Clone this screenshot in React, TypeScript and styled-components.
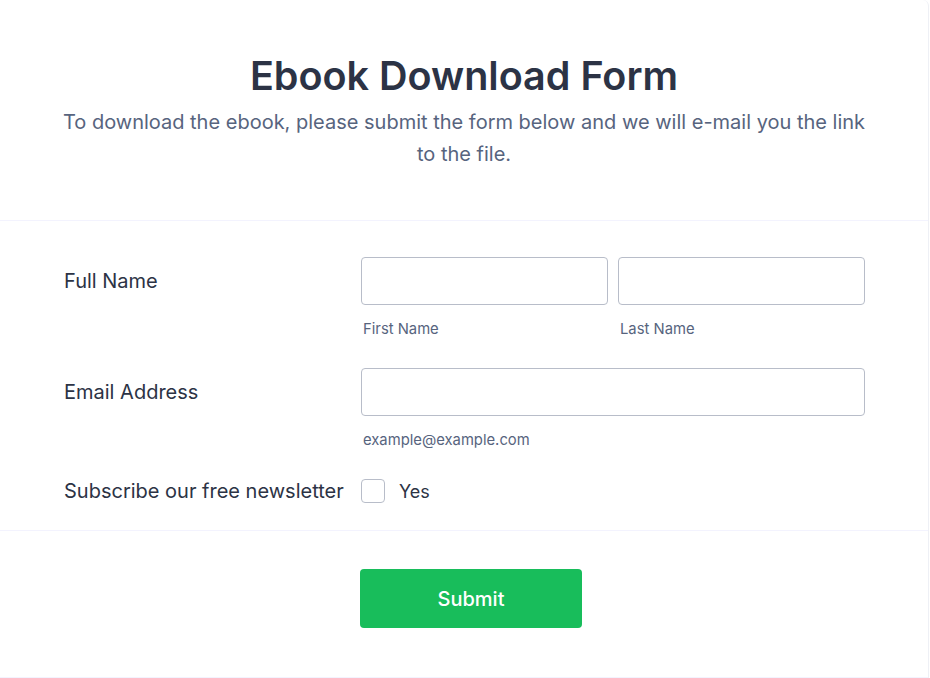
import { createGlobalStyle, styled } from 'styled-components';

const GlobalStyle = createGlobalStyle`
  html, body {
    margin: 0;
    padding: 0;
    background: #ffffff;
  }
  body {
    font-family: Inter, "Noto Sans", "Liberation Sans", sans-serif;
    color: #2c3345;
  }
  * {
    box-sizing: border-box;
  }
`;

const Card = styled.div`
  width: 929px;
  min-height: 678px;
  background: #fff;
  border-right: 1px solid #eef0f5;
  border-top-right-radius: 6px;
`;

const Header = styled.header`
  padding: 52px 60px 50px;
  text-align: center;
  border-bottom: 1px solid #f3f3fe;
`;

const Title = styled.h1`
  margin: 0;
  font-size: 39.5px;
  line-height: 48px;
  font-weight: 600;
  color: #2c3345;
`;

const Subtitle = styled.p`
  margin: 6px 0 0;
  font-size: 20px;
  line-height: 32px;
  color: #57647e;
`;

const Fields = styled.section`
  display: flex;
  flex-direction: column;
  gap: 29px;
  padding: 36px 63px 27px 64px;
  border-bottom: 1px solid #f3f3fe;
`;

const Row = styled.div`
  display: grid;
  grid-template-columns: 297px 1fr;
  align-items: start;
`;

const Label = styled.label<{ $height: number }>`
  display: flex;
  align-items: center;
  height: ${(p) => p.$height}px;
  font-size: 20px;
  color: #2c3345;
  white-space: nowrap;
`;

const Inputs = styled.div`
  display: flex;
  gap: 10px;
`;

const Field = styled.div`
  flex: 1;
  display: flex;
  flex-direction: column;
`;

const TextInput = styled.input`
  height: 48px;
  width: 100%;
  border: 1px solid #b8bdc9;
  border-radius: 4px;
  padding: 0 12px;
  font: inherit;
  font-size: 16px;
  background: #fff;
  outline: none;
`;

const SubLabel = styled.span`
  margin-top: 14px;
  padding-left: 2px;
  font-size: 14.8px;
  line-height: 20px;
  color: #57647e;
`;

const CheckLine = styled.label`
  display: flex;
  align-items: center;
  gap: 14px;
  height: 24px;
  font-size: 18px;
  color: #2c3345;
`;

const Box = styled.span`
  width: 24px;
  height: 24px;
  border: 1px solid #b8bdc9;
  border-radius: 4px;
  background: #fff;
`;

const Footer = styled.footer`
  display: grid;
  grid-template-columns: 296px 1fr;
  padding: 38px 64px 49px;
  border-bottom: 1px solid #f3f3fe;
`;

const SubmitButton = styled.button`
  width: 222px;
  height: 59px;
  border: none;
  border-radius: 4px;
  background: #18bd5b;
  color: #fff;
  font-family: inherit;
  font-size: 20px;
  font-weight: 500;
  cursor: pointer;
`;

export default function App() {
  return (
    <>
      <GlobalStyle />
      <Card>
        <Header>
          <Title>Ebook Download Form</Title>
          <Subtitle>
            To download the ebook, please submit the form below and we will e-mail you the link
            to the file.
          </Subtitle>
        </Header>
        <Fields>
          <Row>
            <Label $height={48}>Full Name</Label>
            <Inputs>
              <Field>
                <TextInput type="text" />
                <SubLabel>First Name</SubLabel>
              </Field>
              <Field>
                <TextInput type="text" />
                <SubLabel>Last Name</SubLabel>
              </Field>
            </Inputs>
          </Row>
          <Row>
            <Label $height={48}>Email Address</Label>
            <Field>
              <TextInput type="email" />
              <SubLabel>example@example.com</SubLabel>
            </Field>
          </Row>
          <Row>
            <Label $height={24}>Subscribe our free newsletter</Label>
            <CheckLine>
              <Box />
              Yes
            </CheckLine>
          </Row>
        </Fields>
        <Footer>
          <span />
          <SubmitButton type="button">Submit</SubmitButton>
        </Footer>
      </Card>
    </>
  );
}
